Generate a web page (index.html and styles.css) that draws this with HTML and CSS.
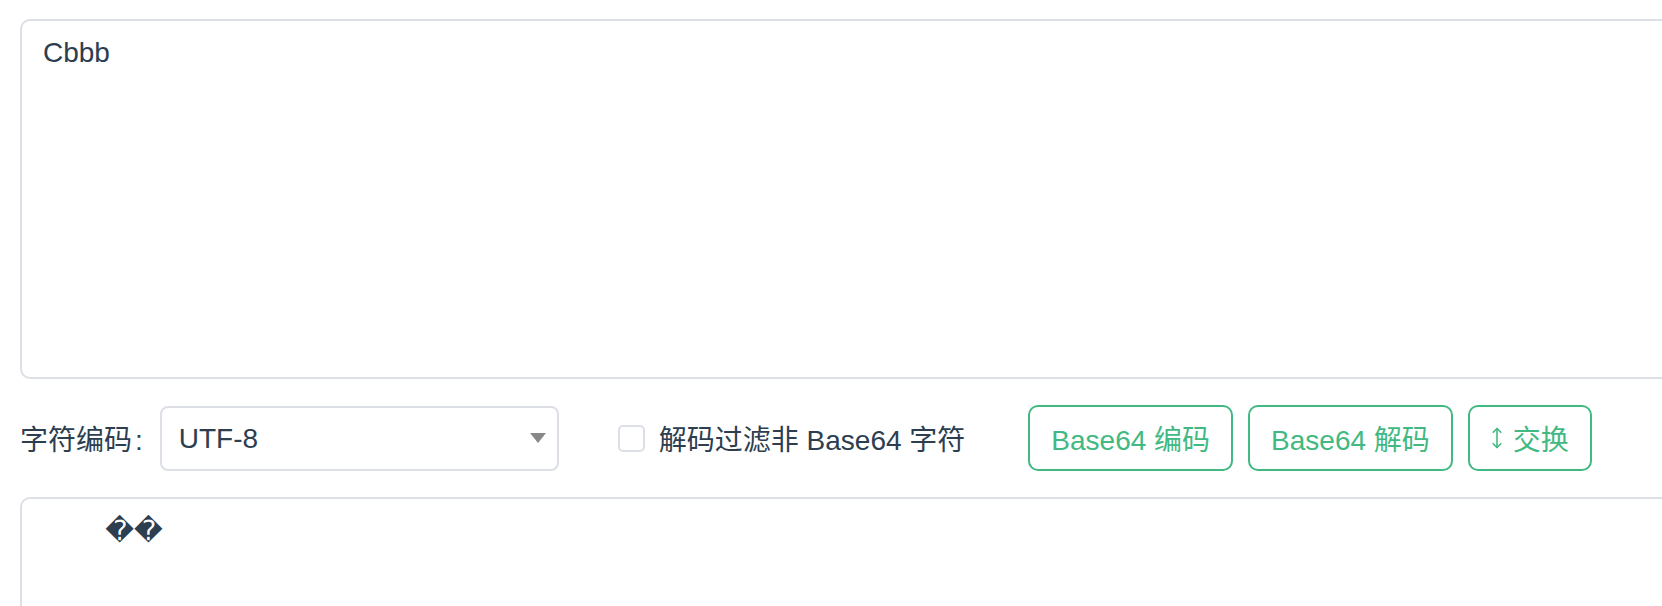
FILE: index.html
```html
<!DOCTYPE html>
<html lang="zh-CN">
<head>
    <meta charset="UTF-8">
    <meta name="viewport" content="width=device-width, initial-scale=1.0">
    <title>Base64 编码 / 解码</title>
    <link rel="stylesheet" href="styles.css">
</head>
<body>
    <div class="page">
        <textarea class="editor editor-input" spellcheck="false">Cbbb</textarea>

        <div class="toolbar">
            <label class="field-label" for="charset">字符编码<span class="colon">:</span></label>
            <span class="select-wrap">
                <select id="charset" class="select">
                    <option>UTF-8</option>
                    <option>GBK</option>
                    <option>GB2312</option>
                    <option>ISO-8859-1</option>
                </select>
            </span>

            <label class="check">
                <input type="checkbox" class="check-box">
                <span>解码过滤非 Base64 字符</span>
            </label>

            <div class="actions">
                <button class="btn">Base64 编码</button>
                <button class="btn">Base64 解码</button>
                <button class="btn btn-swap">
                    <svg class="swap-icon" width="10" height="22" viewBox="0 0 10 22" fill="none" stroke="currentColor" stroke-width="1.6" stroke-linecap="round" stroke-linejoin="round">
                        <path d="M5 1.5v19"/>
                        <path d="M1.2 5.3L5 1.5l3.8 3.8"/>
                        <path d="M1.2 16.7L5 20.5l3.8-3.8"/>
                    </svg>
                    <span>交换</span>
                </button>
            </div>
        </div>

        <textarea class="editor editor-output" spellcheck="false">        ��</textarea>
    </div>
</body>
</html>
```

FILE: styles.css
```css
html, body {
    margin: 0;
    padding: 0;
    background-color: #fff;
    overflow: hidden;
}
body {
    font-family: "Liberation Sans", "Noto Sans CJK SC", sans-serif;
    font-size: 28px;
    color: #2c3e50;
}
.page {
    padding: 19px 0 0 20px;
}
.editor {
    display: block;
    box-sizing: border-box;
    width: 1720px; /* шире окна, правый край уходит за экран */
    margin: 0;
    padding: 11px 21px;
    font-family: inherit;
    font-size: 28px;
    line-height: 1.5;
    color: #2c3e50;
    background-color: #fff;
    border: 2px solid #dcdfe6;
    border-radius: 10px;
    outline: none;
    resize: none;
    white-space: pre;
}
.editor-input {
    height: 360px;
}
.editor-output {
    height: 300px;
    font-family: "Liberation Sans", "DejaVu Sans", "Noto Sans CJK SC", sans-serif;
}
.toolbar {
    display: flex;
    align-items: center;
    margin: 26px 0 26px;
    height: 66px;
}
.field-label {
    white-space: nowrap;
}
.colon {
    padding-left: 3px;
}
.select-wrap {
    position: relative;
    display: inline-block;
    margin-left: 17px;
}
.select-wrap::after {
    content: "";
    position: absolute;
    right: 13px;
    top: 27px;
    border-left: 8.5px solid transparent;
    border-right: 8.5px solid transparent;
    border-top: 10px solid #888;
    pointer-events: none;
}
.select {
    -webkit-appearance: none;
    appearance: none;
    box-sizing: border-box;
    width: 399px;
    height: 65px;
    padding: 0 40px 0 17px;
    font-family: inherit;
    font-size: 28px;
    color: #2c3e50;
    background-color: #fff;
    border: 2px solid #dcdfe6;
    border-radius: 8px;
    outline: none;
}
.check {
    display: flex;
    align-items: center;
    margin-left: 59px;
    white-space: nowrap;
    cursor: pointer;
}
.check-box {
    -webkit-appearance: none;
    appearance: none;
    box-sizing: border-box;
    width: 27px;
    height: 27px;
    margin: 0 14px 0 0;
    border: 2px solid #dcdfe6;
    border-radius: 5px;
    background-color: #fff;
}
.check-box:checked {
    background-color: #42b983;
    border-color: #42b983;
}
.actions {
    display: flex;
    gap: 15px;
    margin-left: 63px;
}
.btn {
    box-sizing: border-box;
    height: 66px;
    padding: 0 21px;
    font-family: inherit;
    font-size: 28px;
    color: #42b983;
    background-color: #fff;
    border: 2px solid #42b983;
    border-radius: 10px;
    cursor: pointer;
    white-space: nowrap;
}
.btn:hover {
    background-color: #f0faf5;
}
.btn-swap {
    display: inline-flex;
    align-items: center;
    padding: 0 21px 0 22px;
}
.swap-icon {
    display: block;
    margin-right: 11px;
}
```
